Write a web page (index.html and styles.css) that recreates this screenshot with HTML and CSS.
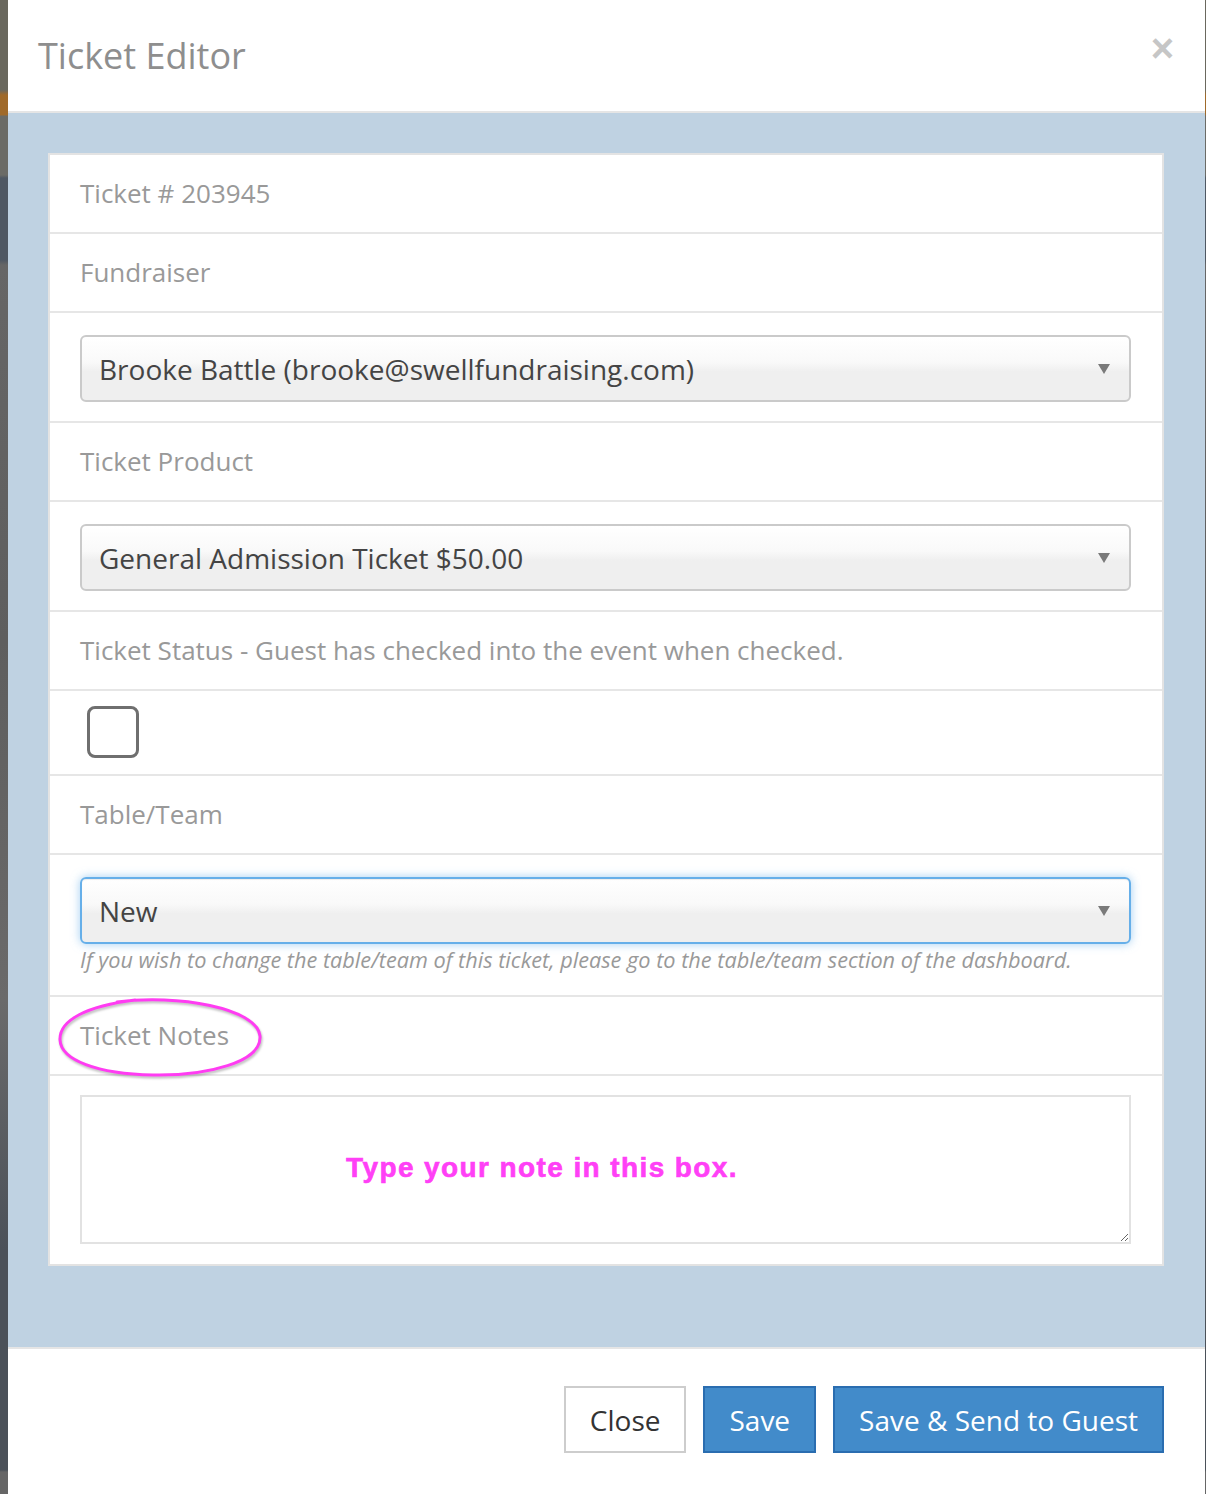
FILE: index.html
```html
<!DOCTYPE html>
<html lang="en">
<head>
<meta charset="UTF-8">
<meta name="viewport" content="width=device-width, initial-scale=1.0">
<title>Ticket Editor</title>
<link rel="stylesheet" href="styles.css">
</head>
<body>

<div class="modal" role="dialog" aria-labelledby="modal-title">
    <header class="modal-header">
        <h4 id="modal-title" class="modal-title">Ticket Editor</h4>
        <button class="close" aria-label="Close">&times;</button>
    </header>

    <div class="modal-body">
        <ul class="list-group">
            <li class="list-item label-item">Ticket # 203945</li>
            <li class="list-item label-item">Fundraiser</li>
            <li class="list-item field-item">
                <div class="select-wrap">
                    <select class="form-select">
                        <option>Brooke Battle (brooke@swellfundraising.com)</option>
                    </select>
                </div>
            </li>
            <li class="list-item label-item">Ticket Product</li>
            <li class="list-item field-item">
                <div class="select-wrap">
                    <select class="form-select">
                        <option>General Admission Ticket $50.00</option>
                    </select>
                </div>
            </li>
            <li class="list-item label-item">Ticket Status - Guest has checked into the event when checked.</li>
            <li class="list-item check-item">
                <input type="checkbox" class="check" aria-label="Checked in">
            </li>
            <li class="list-item label-item">Table/Team</li>
            <li class="list-item field-item help-item">
                <div class="select-wrap">
                    <select class="form-select is-focused">
                        <option>New</option>
                    </select>
                </div>
                <p class="help-text">If you wish to change the table/team of this ticket, please go to the table/team section of the dashboard.</p>
            </li>
            <li class="list-item label-item notes-label">
                Ticket Notes
                <!-- hand drawn circle from the annotation -->
                <svg class="circle-mark" width="210" height="84" viewBox="0 0 210 84" aria-hidden="true">
                    <path d="M60 6 C 120 -2, 200 12, 203 40 C 205 66, 150 80, 96 79 C 40 78, 4 64, 3 44 C 2 24, 30 10, 78 4" fill="none" stroke="#ff3cf2" stroke-width="3" stroke-linecap="round"/>
                </svg>
            </li>
            <li class="list-item notes-item">
                <div class="notes-wrap">
                    <textarea class="notes" aria-label="Ticket Notes"></textarea>
                    <span class="notes-hint">Type your note in this box.</span>
                </div>
            </li>
        </ul>
    </div>

    <footer class="modal-footer">
        <button class="btn btn-default">Close</button>
        <button class="btn btn-primary">Save</button>
        <button class="btn btn-primary">Save &amp; Send to Guest</button>
    </footer>
</div>

</body>
</html>
```

FILE: styles.css
```css
html, body {
    margin: 0;
    padding: 0;
    height: 100%;
    font-family: "Open Sans", "Noto Sans", sans-serif;
    background: linear-gradient(to bottom, #6a685e 0, #6a685e 90px, #a06a2a 95px, #a06a2a 115px, #6b6b66 116px, #6b6b66 175px, #4f5863 178px, #4f5863 260px, #666 265px, #5e5e5e 640px, #6a6a6a 1000px, #4b5159 1250px, #4b5159 1470px, #666 1472px);
    overflow: hidden;
}
.modal {
    margin-left: 8px;
    width: 1197px;
    height: 100%;
    background: #fff;
    display: flex;
    flex-direction: column;
}
.modal-header {
    height: 111px;
    border-bottom: 2px solid #e5e5e5;
    display: flex;
    justify-content: space-between;
    align-items: center;
    padding: 0 31px 0 30px;
}
.modal-title {
    margin: 0;
    font-size: 36px;
    font-weight: normal;
    color: #8e8e8e;
}
.close {
    align-self: flex-start;
    margin-top: 28px;
    padding: 0;
    border: 0;
    background: none;
    font-family: "Liberation Sans", Arial, sans-serif;
    font-size: 40px;
    font-weight: bold;
    line-height: 1;
    color: #c6c6c6;
    cursor: pointer;
}
.modal-body {
    background: #bfd2e2;
    padding: 40px 41px 81px 40px;
    border-bottom: 2px solid #e5e5e5;
}
.list-group {
    list-style: none;
    margin: 0;
    padding: 0;
    background: #fff;
    border: 2px solid #e3e3e3;
}
.list-item {
    padding: 0 31px 0 30px;
    border-bottom: 2px solid #e6e6e6;
}
.list-item:last-child {
    border-bottom: 0;
}
.label-item {
    font-size: 26px;
    line-height: 36px;
    padding-top: 20px;
    padding-bottom: 21px;
    color: #999;
}
.field-item {
    padding-top: 22px;
    padding-bottom: 19px;
}
.help-item {
    padding-top: 22px;
    padding-bottom: 20px;
}
.select-wrap {
    position: relative;
}
.select-wrap::after {
    content: "";
    position: absolute;
    right: 21px;
    top: 29px;
    border-left: 6px solid transparent;
    border-right: 6px solid transparent;
    border-top: 10px solid #7a7a7a;
    pointer-events: none;
}
.form-select {
    -webkit-appearance: none;
    appearance: none;
    display: block;
    width: 100%;
    height: 67px;
    margin: 0;
    padding: 0 40px 0 17px;
    border: 2px solid #cacaca;
    border-radius: 6px;
    background: linear-gradient(to bottom, #fff 0%, #f9f9f9 40%, #efefef 55%, #efefef 100%);
    font-family: "Open Sans", "Noto Sans", sans-serif;
    font-size: 28px;
    color: #444;
    outline: none;
}
.form-select.is-focused {
    border-color: #66afe9;
    box-shadow: inset 0 1px 1px rgba(0,0,0,.075), 0 0 10px rgba(102,175,233,.6);
}
.help-text {
    margin: 0;
    font-size: 21.7px;
    line-height: 31px;
    font-style: italic;
    color: #999;
}
.check-item {
    padding-top: 15px;
    padding-bottom: 16px;
}
.check {
    -webkit-appearance: none;
    appearance: none;
    display: block;
    width: 52px;
    height: 52px;
    margin: 0 0 0 7px;
    border: 3px solid #6f6f6f;
    border-radius: 8px;
    background: #fff;
}
.notes-label {
    position: relative;
}
.circle-mark {
    position: absolute;
    left: 7px;
    top: -1px;
    filter: drop-shadow(1px 2px 1px rgba(0,0,0,.25));
}
.notes-item {
    padding-top: 19px;
    padding-bottom: 20px;
}
.notes-wrap {
    position: relative;
}
.notes {
    display: block;
    box-sizing: border-box;
    width: 100%;
    height: 149px;
    margin: 0;
    border: 2px solid #e2e2e2;
    border-radius: 0;
    resize: vertical;
    font-family: "Open Sans", sans-serif;
    font-size: 22px;
}
.notes-hint {
    position: absolute;
    left: 266px;
    top: 57px;
    font-family: "Liberation Sans", Arial, sans-serif;
    font-size: 28px;
    font-weight: bold;
    letter-spacing: 1.4px;
    -webkit-text-stroke: 0.6px #ff40f6;
    color: #ff40f6;
    pointer-events: none;
}
.modal-footer {
    flex: 1;
    display: flex;
    justify-content: flex-end;
    align-items: flex-start;
    gap: 17px;
    padding: 37px 41px 0 0;
}
.btn {
    height: 67px;
    padding: 0 24px;
    border: 2px solid transparent;
    border-radius: 0;
    font-family: "Open Sans", sans-serif;
    font-size: 28px;
    cursor: pointer;
}
.btn-default {
    background: #fff;
    border-color: #cdcdcd;
    color: #333;
}
.btn-primary {
    background: #428bca;
    border-color: #2a6db0;
    color: #fff;
}
```
